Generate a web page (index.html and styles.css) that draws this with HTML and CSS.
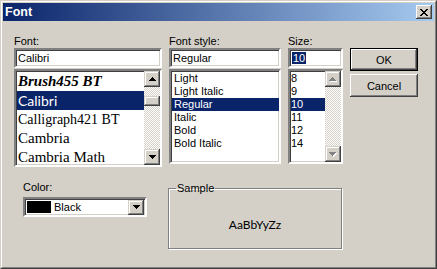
FILE: index.html
```html
<!DOCTYPE html>
<html lang="en">
<head>
  <meta charset="UTF-8" />
  <title>Font</title>
  <link rel="stylesheet" href="styles.css">
</head>
<body>
  <div class="window">
    <div class="frame">
      <header class="titlebar">
        <span class="title">Font</span>
        <button class="close-btn" aria-label="Close">
          <svg width="8" height="7" viewBox="0 0 8 7"><path d="M0 0h2v1h1v1h2V1h1V0h2v1H7v1H6v1H5v1h1v1h1v1h1v1H6V6H5V5H3v1H2v1H0V6h1V5h1V4h1V3H2V2H1V1H0z"/></svg>
        </button>
      </header>

      <main class="content">
        <div class="top-row">
          <div class="col col-font">
            <div class="label">Font:</div>
            <div class="textbox">Calibri</div>
            <div class="list list-font">
              <div class="items">
                <div class="item f-brush">Brush455 BT</div>
                <div class="item f-calibri selected">Calibri</div>
                <div class="item f-calligraph">Calligraph421 BT</div>
                <div class="item f-cambria">Cambria</div>
                <div class="item f-cambria">Cambria Math</div>
              </div>
              <div class="vscroll">
                <div class="sbtn"><svg width="7" height="4"><path d="M3 0h1v1h1v1h1v1h1v1H0V3h1V2h1V1h1z"/></svg></div>
                <div class="track"><div class="thumb"></div></div>
                <div class="sbtn"><svg width="7" height="4"><path d="M0 0h7v1H6v1H5v1H4v1H3V3H2V2H1V1H0z"/></svg></div>
              </div>
            </div>
          </div>

          <div class="col col-style">
            <div class="label">Font style:</div>
            <div class="textbox">Regular</div>
            <div class="list list-small">
              <div class="items">
                <div class="item">Light</div>
                <div class="item">Light Italic</div>
                <div class="item selected">Regular</div>
                <div class="item">Italic</div>
                <div class="item">Bold</div>
                <div class="item">Bold Italic</div>
              </div>
            </div>
          </div>

          <div class="col col-size">
            <div class="label">Size:</div>
            <div class="textbox"><span class="sel-text">10</span></div>
            <div class="list list-small">
              <div class="items items-size">
                <div class="item">8</div>
                <div class="item">9</div>
                <div class="item selected">10</div>
                <div class="item">11</div>
                <div class="item">12</div>
                <div class="item">14</div>
              </div>
              <div class="vscroll">
                <div class="sbtn disabled"><svg width="8" height="5"><path fill="#fff" d="M4 1h1v1h1v1h1v1h1v1H1V4h1V3h1V2h1z"/><path fill="#808080" d="M3 0h1v1h1v1h1v1h1v1H0V3h1V2h1V1h1z"/></svg></div>
                <div class="track"></div>
                <div class="sbtn disabled"><svg width="8" height="5"><path fill="#fff" d="M1 1h7v1H7v1H6v1H5v1H4V4H3V3H2V2H1z"/><path fill="#808080" d="M0 0h7v1H6v1H5v1H4v1H3V3H2V2H1V1H0z"/></svg></div>
              </div>
            </div>
          </div>

          <div class="col col-buttons">
            <button class="btn default">OK</button>
            <button class="btn">Cancel</button>
          </div>
        </div>

        <div class="bottom-row">
          <div class="col-color">
            <div class="label">Color:</div>
            <div class="combo">
              <span class="swatch"></span>
              <span class="combo-text">Black</span>
              <div class="sbtn combo-btn"><svg width="7" height="4"><path d="M0 0h7v1H6v1H5v1H4v1H3V3H2V2H1V1H0z"/></svg></div>
            </div>
          </div>

          <fieldset class="sample">
            <legend>Sample</legend>
            <div class="sample-text">AaBbYyZz</div>
          </fieldset>
        </div>
      </main>
    </div>
  </div>
</body>
</html>
```

FILE: styles.css
```css
body {
  margin: 0;
  font-family: "Liberation Sans", Arial, sans-serif;
  font-size: 11px;
  color: #000;
  background-color: #d4d0c8;
}
.window {
  width: 437px;
  height: 269px;
  box-sizing: border-box;
  border: 1px solid;
  border-color: #d4d0c8 #404040 #404040 #d4d0c8;
}
.frame {
  height: 100%;
  box-sizing: border-box;
  border: 1px solid;
  border-color: #fff #808080 #808080 #fff;
  padding: 1px;
}
.titlebar {
  height: 18px;
  display: flex;
  justify-content: space-between;
  align-items: center;
  padding: 0 2px;
  background: linear-gradient(to right, #0a246a, #a6caf0);
}
.title {
  color: #fff;
  font-weight: bold;
  font-size: 12.5px;
}
.close-btn {
  width: 16px;
  height: 14px;
  padding: 0;
  border: none;
  background-color: #d4d0c8;
  box-shadow: inset -1px -1px #404040, inset 1px 1px #fff, inset -2px -2px #808080;
  display: flex;
  justify-content: center;
  align-items: center;
}
.content {
  padding: 14px 0 0 11px;
}
.top-row {
  display: flex;
  gap: 7px;
}
.col-font {
  width: 148px;
}
.col-style {
  width: 112px;
}
.col-size {
  width: 55px;
}
.col-buttons {
  width: 68px;
  padding-top: 13px;
  display: flex;
  flex-direction: column;
  gap: 3px;
}
.label {
  height: 13px;
  line-height: 13px;
}
.textbox {
  height: 20px;
  box-sizing: border-box;
  border: 2px solid;
  border-color: #808080 #fff #fff #808080;
  box-shadow: inset 1px 1px #404040, inset -1px -1px #d4d0c8;
  background-color: #fff;
  padding: 0 2px;
  line-height: 16px;
  margin-bottom: 1px;
}
.sel-text {
  background-color: #0a246a;
  color: #fff;
  padding: 0 1px;
}
.list {
  display: flex;
  box-sizing: border-box;
  border: 2px solid;
  border-color: #808080 #fff #fff #808080;
  box-shadow: inset 1px 1px #404040, inset -1px -1px #d4d0c8;
  background-color: #fff;
  overflow: hidden;
}
.list-font {
  height: 98px;
}
.list-small {
  height: 95px;
}
.items {
  flex: 1;
  padding: 1px 0 0 1px;
  overflow: hidden;
}
.item {
  height: 13px;
  line-height: 13px;
  padding-left: 2px;
  white-space: nowrap;
}
.items-size .item {
  padding-left: 0;
}
.item.selected {
  background-color: #0a246a;
  color: #fff;
}
.list-font .item {
  height: 19px;
  line-height: 19px;
  padding-left: 1px;
}
.f-brush {
  font-family: "Liberation Serif", serif;
  font-weight: bold;
  font-style: italic;
  font-size: 15px;
}
.f-calibri {
  font-family: Lato, sans-serif;
  font-size: 14px;
}
.f-calligraph {
  font-family: "Liberation Serif", serif;
  font-size: 14px;
}
.f-cambria {
  font-family: "Liberation Serif", serif;
  font-size: 15px;
}
.vscroll {
  width: 16px;
  display: flex;
  flex-direction: column;
}
.sbtn {
  width: 16px;
  height: 16px;
  flex: none;
  box-sizing: border-box;
  background-color: #d4d0c8;
  box-shadow: inset -1px -1px #404040, inset 1px 1px #d4d0c8, inset -2px -2px #808080, inset 2px 2px #fff;
  display: flex;
  justify-content: center;
  align-items: center;
}
.track {
  flex: 1;
  background: repeating-conic-gradient(#fff 0 25%, #d4d0c8 0 50%) 0 0 / 2px 2px;
}
.thumb {
  height: 10px;
  margin-top: 9px;
  background-color: #d4d0c8;
  box-shadow: inset -1px -1px #404040, inset 1px 1px #d4d0c8, inset -2px -2px #808080, inset 2px 2px #fff;
}
.btn {
  width: 68px;
  height: 23px;
  padding: 0;
  font-family: inherit;
  font-size: 11px;
  color: #000;
  border: none;
  background-color: #d4d0c8;
  box-shadow: inset -1px -1px #404040, inset 1px 1px #fff, inset -2px -2px #808080, inset 2px 2px #d4d0c8;
}
.btn.default {
  box-shadow: inset 0 0 0 1px #000, inset -2px -2px #404040, inset 2px 2px #fff, inset -3px -3px #808080;
}
.bottom-row {
  display: flex;
  margin-top: 14px;
}
.col-color {
  width: 124px;
  margin-left: 9px;
}
.combo {
  height: 20px;
  margin-top: 3px;
  box-sizing: border-box;
  border: 2px solid;
  border-color: #808080 #fff #fff #808080;
  box-shadow: inset 1px 1px #404040, inset -1px -1px #d4d0c8;
  background-color: #fff;
  display: flex;
  align-items: center;
  padding: 0 1px 0 2px;
}
.swatch {
  width: 24px;
  height: 12px;
  background-color: #000;
}
.combo-text {
  flex: 1;
  margin-left: 3px;
}
.combo-btn {
  width: 16px;
  height: 15px;
}
.sample {
  width: 174px;
  height: 67px;
  box-sizing: border-box;
  margin: 1px 0 0 21px;
  padding: 0;
  border: 1px solid #808080;
  box-shadow: inset 1px 1px #fff, 1px 1px #fff;
}
.sample legend {
  margin-left: 7px;
  padding: 0 1px;
  line-height: 13px;
}
.sample-text {
  font-family: Lato, sans-serif;
  font-size: 12px;
  text-align: center;
  padding-top: 22px;
}
```
